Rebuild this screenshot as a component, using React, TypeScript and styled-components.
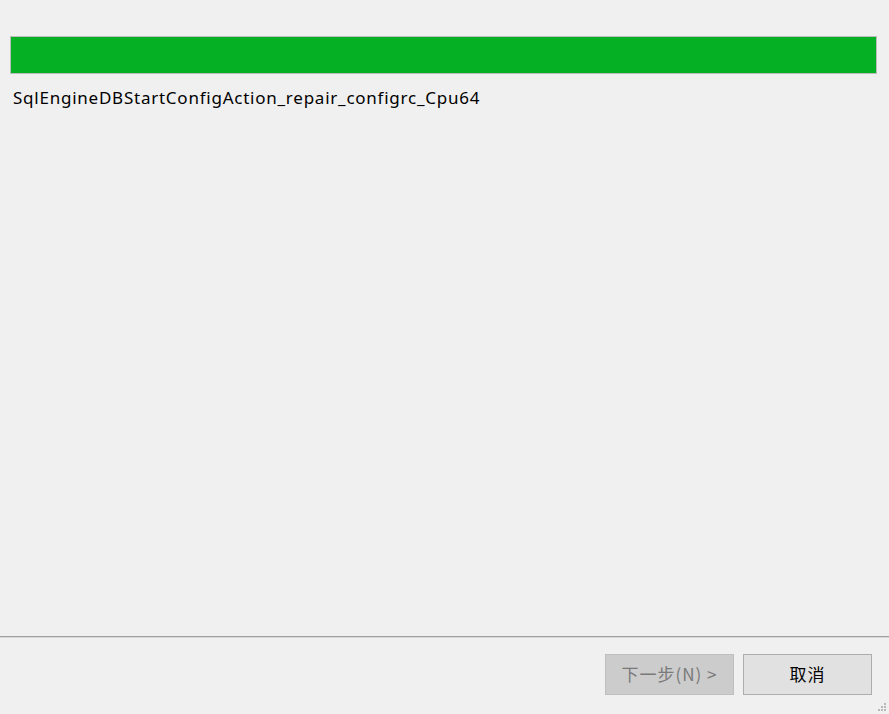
import React from "react";
import styled, { createGlobalStyle } from "styled-components";

const Global = createGlobalStyle`
  html, body { margin: 0; padding: 0; background: #f0f0f0; }
  body { font-family: "Noto Sans", "Noto Sans CJK SC", sans-serif; }
`;

const Window = styled.div`
  width: 889px;
  height: 714px;
  display: flex;
  flex-direction: column;
  background: #f0f0f0;
  position: relative;
  overflow: hidden;
`;

const Content = styled.div`
  flex: 1;
  padding: 36px 12px 0 10px;
  display: flex;
  flex-direction: column;
`;

const ProgressTrack = styled.div`
  height: 36px;
  border: 1px solid #bcbcbc;
  background: #e6e6e6;
  display: flex;
`;

const ProgressFill = styled.div`
  background: #06b025;
  height: 100%;
`;

const StatusText = styled.div`
  margin-top: 13px;
  margin-left: 3px;
  font-size: 17px;
  line-height: 22px;
  color: #000;
  letter-spacing: 0.76px;
`;

const Separator = styled.div`
  height: 1px;
  background: #a0a0a0;
  border-bottom: 1px solid #d8d8d8;
`;

const Footer = styled.div`
  height: 76px;
  display: flex;
  justify-content: flex-end;
  align-items: flex-start;
  gap: 9px;
  padding: 16px 17px 0 0;
  box-sizing: border-box;
`;

const Button = styled.button<{ $disabled?: boolean }>`
  width: 129px;
  height: 41px;
  box-sizing: border-box;
  font-family: "Noto Sans CJK SC", "Noto Sans", sans-serif;
  font-size: 17px;
  letter-spacing: 1px;
  border: 1px solid ${(p) => (p.$disabled ? "#bfbfbf" : "#adadad")};
  background: ${(p) => (p.$disabled ? "#cccccc" : "#e1e1e1")};
  color: ${(p) => (p.$disabled ? "#7a7a7a" : "#000")};
  padding: 0 0 2px 0;
`;

const Grip = styled.svg`
  position: absolute;
  right: 2px;
  bottom: 2px;
`;

export default function App() {
  return (
    <Window>
      <Global />
      <Content>
        <ProgressTrack>
          <ProgressFill style={{ width: "100%" }} />
        </ProgressTrack>
        <StatusText>SqlEngineDBStartConfigAction_repair_configrc_Cpu64</StatusText>
      </Content>
      <Separator />
      <Footer>
        <Button $disabled disabled>下一步(N) &gt;</Button>
        <Button>取消</Button>
      </Footer>
      <Grip width="10" height="10" viewBox="0 0 10 10">
        <rect x="7" y="1" width="2" height="2" fill="#b8b8b8" />
        <rect x="4" y="4" width="2" height="2" fill="#b8b8b8" />
        <rect x="7" y="4" width="2" height="2" fill="#b8b8b8" />
        <rect x="1" y="7" width="2" height="2" fill="#b8b8b8" />
        <rect x="4" y="7" width="2" height="2" fill="#b8b8b8" />
        <rect x="7" y="7" width="2" height="2" fill="#b8b8b8" />
      </Grip>
    </Window>
  );
}
